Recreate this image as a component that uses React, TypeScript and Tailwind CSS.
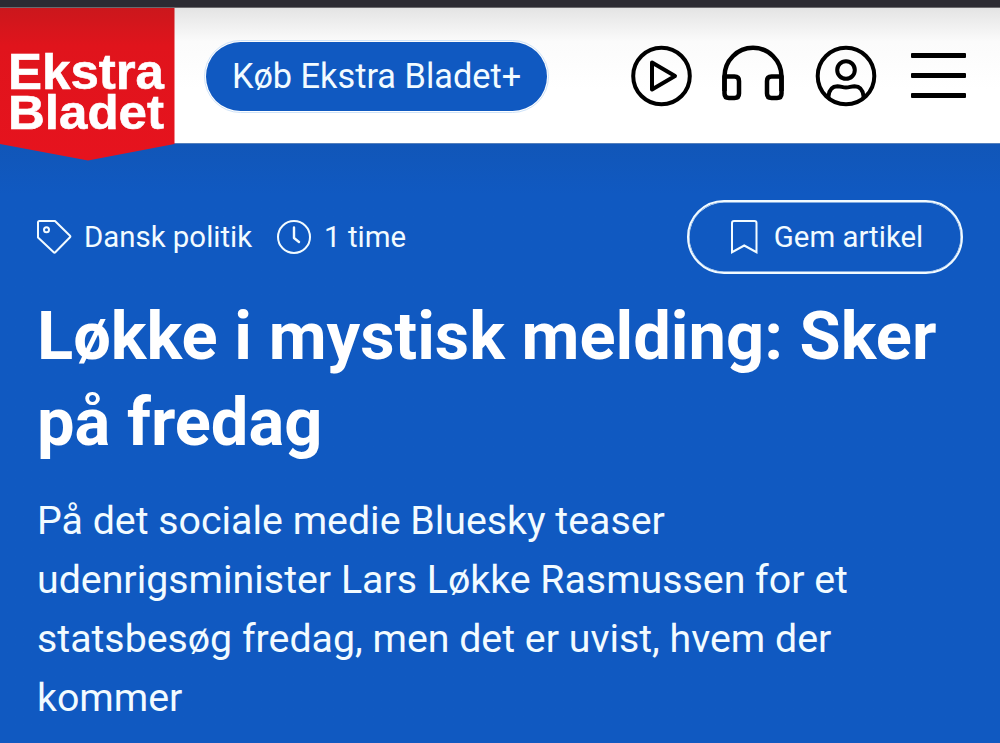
import React from 'react';

function Logo() {
    return (
        <svg width="175" height="153" viewBox="0 0 175 153" className="relative z-10 -mb-[18px] shrink-0">
            <defs>
                <linearGradient id="logoShade" x1="0" y1="0" x2="0" y2="1">
                    <stop offset="0" stopColor="#cb171c" />
                    <stop offset="0.25" stopColor="#e0141c" />
                    <stop offset="1" stopColor="#e6131e" />
                </linearGradient>
            </defs>
            <path d="M0 0H174.500V136L88 152.500L0 136Z" fill="url(#logoShade)" />
            <g fill="#fff" stroke="#fff" strokeWidth="0.600" fontFamily="'Liberation Sans', sans-serif" fontWeight="700">
                <text x="8" y="81" fontSize="50" textLength="156" lengthAdjust="spacingAndGlyphs">Ekstra</text>
                <text x="8" y="121" fontSize="49" textLength="156" lengthAdjust="spacingAndGlyphs">Bladet</text>
            </g>
        </svg>
    );
}

function PlayIcon() {
    return (
        <svg width="62" height="62" viewBox="0 0 62 62" fill="none" stroke="#000" strokeWidth="4" strokeLinejoin="round">
            <circle cx="31.500" cy="31" r="28.300" />
            <path d="M22 17.500L45 31L22 44.500Z" />
        </svg>
    );
}

function HeadphonesIcon() {
    return (
        <svg width="62" height="62" viewBox="0 0 62 62" fill="none" stroke="#000" strokeWidth="4.500" strokeLinejoin="round">
            <path d="M2.500 46V31.500A28.500 28.700 0 0 1 59.500 31.500V46" />
            <path d="M2.500 31.500H12.500Q17 31.500 17 36V48.500Q17 53 12.500 53H7Q2.500 53 2.500 48.500Z" />
            <path d="M59.500 31.500H49.500Q45 31.500 45 36V48.500Q45 53 49.500 53H55Q59.500 53 59.500 48.500Z" />
        </svg>
    );
}

function UserIcon() {
    return (
        <svg width="62" height="62" viewBox="0 0 62 62" fill="none" stroke="#000" strokeWidth="4">
            <circle cx="31" cy="31" r="28.300" />
            <circle cx="31" cy="25" r="8.800" />
            <path d="M13.500 52.500V51Q14.500 41.500 22.500 41.200C26 41.200 27.500 42.500 31 42.500S36 41.200 39.500 41.200Q47.500 41.500 48.500 51V52.500" />
        </svg>
    );
}

function TagIcon() {
    return (
        <svg width="36" height="36" viewBox="0 0 36 36" fill="none" stroke="currentColor" strokeWidth="2" strokeLinejoin="round">
            <path d="M2.500 2H18L33 16.700Q33.800 17.500 33 18.300L18.300 33.300Q17.500 34.100 16.700 33.300L1 18.500V3.500Q1 2 2.500 2Z" />
            <circle cx="9.500" cy="10.800" r="2.500" />
        </svg>
    );
}

function ClockIcon() {
    return (
        <svg width="36" height="36" viewBox="0 0 36 36" fill="none" stroke="currentColor" strokeWidth="2" strokeLinecap="round" strokeLinejoin="round">
            <circle cx="18" cy="18" r="16" />
            <path d="M18 8.500V19L23 23" strokeWidth="2.400" />
        </svg>
    );
}

function BookmarkIcon() {
    return (
        <svg width="28" height="36" viewBox="0 0 28 36" fill="none" stroke="currentColor" strokeWidth="2">
            <path d="M2 33.200V4Q2 2 4 2H24.500Q26.500 2 26.500 4V33.200L14.250 26.500Z" />
        </svg>
    );
}

export default function App() {
    return (
        <div className="h-[743px] w-[1000px] overflow-hidden bg-[#1059c1] font-['Roboto',sans-serif] text-white">
            <div className="h-2 border-b border-[#6b6a6e] bg-[#2c2b33]"></div>

            {/* Header */}
            <header className="flex h-[135px] items-start bg-linear-to-b from-[#e4e4e4] via-[#fbfbfb] via-25% to-white to-60%">
                <Logo />
                <div className="flex h-full grow items-center pr-[34px] pl-[29px]">
                    <button className="mt-px h-[73px] w-[345px] rounded-full border border-[#cfe3f8] p-px">
                        <span className="flex h-full items-center justify-center rounded-full bg-[#1059c1] pt-0.5 text-[34.3px] whitespace-nowrap text-[#f2fbff]">
                            Køb Ekstra Bladet+
                        </span>
                    </button>
                    <nav className="ml-auto flex items-center">
                        <PlayIcon />
                        <div className="ml-[30px]">
                            <HeadphonesIcon />
                        </div>
                        <div className="ml-[31px]">
                            <UserIcon />
                        </div>
                        <div className="ml-[34px] flex w-[55px] flex-col gap-[15px]">
                            <span className="h-[5px] rounded-[1px] bg-black"></span>
                            <span className="h-[5px] rounded-[1px] bg-black"></span>
                            <span className="h-[5px] rounded-[1px] bg-black"></span>
                        </div>
                    </nav>
                </div>
            </header>

            {/* Article */}
            <main className="border-t border-[#5480bd] bg-linear-to-b from-[#1156b8] to-[#1059c1] to-[50px] px-[37px] pt-[56px]">
                <div className="flex h-[74px] items-center text-[29.4px] text-[#f2fbff]">
                    <TagIcon />
                    <span className="ml-[11px]">Dansk politik</span>
                    <div className="ml-[24px]">
                        <ClockIcon />
                    </div>
                    <span className="ml-[12px]">1 time</span>
                    <button className="ml-auto flex h-full w-[276px] items-center justify-center gap-4 rounded-full border-2 border-[#f2fbff] pl-[3px] shadow-[inset_0_0_0_0.5px_#f2fbff]">
                        <BookmarkIcon />
                        <span>Gem artikel</span>
                    </button>
                </div>

                <h1 className="mt-[19px] text-[66.85px] leading-[86px] font-bold whitespace-nowrap">
                    Løkke i mystisk melding: Sker
                    <br />
                    på fredag
                </h1>
                <p className="mt-[27px] text-[39.3px] leading-[59px] whitespace-nowrap text-[#f2fbff]">
                    På det sociale medie Bluesky teaser
                    <br />
                    udenrigsminister Lars Løkke Rasmussen for et
                    <br />
                    statsbesøg fredag, men det er uvist, hvem der
                    <br />
                    kommer
                </p>
            </main>
        </div>
    );
}
